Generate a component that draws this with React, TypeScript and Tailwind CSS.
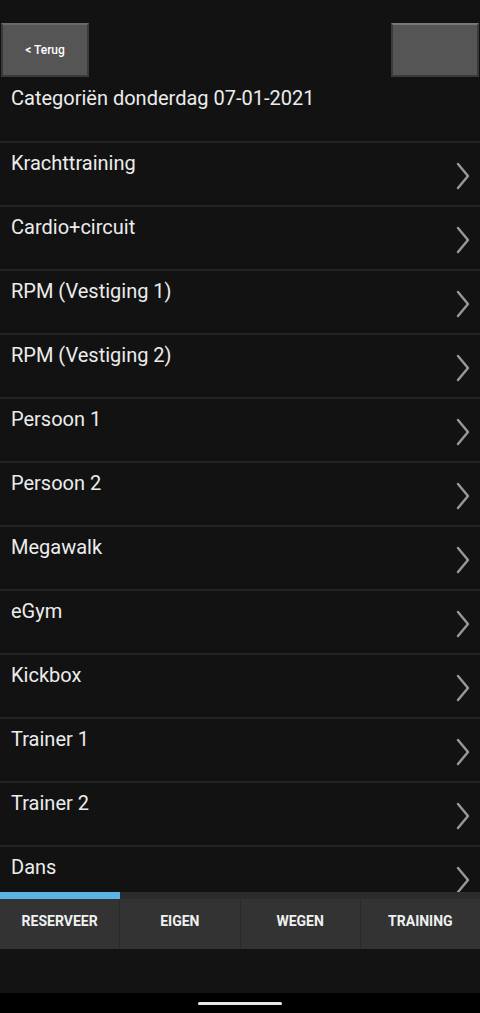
import { useState } from 'react'

const categories = [
  'Krachttraining',
  'Cardio+circuit',
  'RPM (Vestiging 1)',
  'RPM (Vestiging 2)',
  'Persoon 1',
  'Persoon 2',
  'Megawalk',
  'eGym',
  'Kickbox',
  'Trainer 1',
  'Trainer 2',
  'Dans',
]

const tabs = ['Reserveer', 'Eigen', 'Wegen', 'Training']

function Chevron() {
  return (
    <svg width="14" height="28" viewBox="0 0 14 28" fill="none">
      <path d="M2 2 L12 14 L2 26" stroke="#9a9a9a" strokeWidth="2.4" strokeLinecap="round" strokeLinejoin="round" />
    </svg>
  )
}

export default function App() {
  const [active, setActive] = useState(0)

  return (
    <div className="flex flex-col h-[1013px] w-[480px] overflow-hidden bg-[#121212] text-[#ececec] font-['Roboto','Liberation_Sans',sans-serif]">
      {/* top buttons */}
      <div className="flex justify-between pt-[23px] px-[1px] h-[77px]">
        <button className="w-[88px] h-[54px] bg-[#555] border-2 border-[#3a3a3a] border-t-[#6a6a6a] text-white text-[12px] font-medium">
          &lt; Terug
        </button>
        <button className="w-[88px] h-[54px] bg-[#555] border-2 border-[#3a3a3a] border-t-[#777]" />
      </div>

      <div className="h-[64px] px-[11px] pt-[8px] text-[20px] leading-[26px]">
        Categoriën donderdag 07-01-2021
      </div>

      {/* list */}
      <div className="flex-1 overflow-hidden">
        {categories.map((c) => (
          <div key={c} className="flex justify-between border-t-2 border-[#232323] h-[64px] pl-[11px] pr-[10px]">
            <span className="text-[20px] leading-[26px] pt-[7px]">{c}</span>
            <span className="pt-[19px]">
              <Chevron />
            </span>
          </div>
        ))}
      </div>

      {/* tab bar */}
      <div className="flex flex-col h-[57px] bg-[#333]">
        <div className="flex h-[7px] bg-[#2c2c2c]">
          {tabs.map((t, i) => (
            <div key={t} className={i === active ? 'flex-1 bg-[#5ab3e4] mr-[1px]' : 'flex-1'} />
          ))}
        </div>
        <div className="flex flex-1">
          {tabs.map((t, i) => (
            <button
              key={t}
              onClick={() => setActive(i)}
              className={`flex-1 flex items-center justify-center uppercase text-[14px] font-bold text-[#f0f0f0] pb-[6px] ${i > 0 ? 'border-l border-[#2a2a2a]' : ''}`}
            >
              {t}
            </button>
          ))}
        </div>
      </div>

      <div className="h-[44px] bg-[#131313]" />
      <div className="h-[20px] bg-black flex justify-center pt-[9px]">
        <div className="w-[84px] h-[3px] rounded-full bg-[#e8e8e8]" />
      </div>
    </div>
  )
}
